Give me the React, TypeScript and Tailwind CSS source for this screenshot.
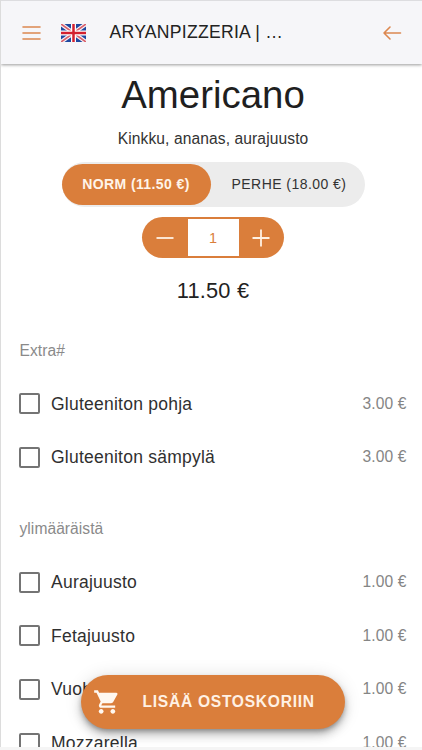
type Extra = { name: string; price: string }

const glutenExtras: Extra[] = [
  { name: 'Gluteeniton pohja', price: '3.00 €' },
  { name: 'Gluteeniton sämpylä', price: '3.00 €' },
]

const toppings: Extra[] = [
  { name: 'Aurajuusto', price: '1.00 €' },
  { name: 'Fetajuusto', price: '1.00 €' },
  { name: 'Vuohenjuusto', price: '1.00 €' },
  { name: 'Mozzarella', price: '1.00 €' },
]

const Flag = () => (
  <svg width="25" height="18" viewBox="0 0 50 36" className="shrink-0">
    <rect width="50" height="36" fill="#1f48a0" />
    <path d="M0 0L50 36M50 0L0 36" stroke="#f7f3f6" strokeWidth="8" />
    <path d="M0 0L50 36M50 0L0 36" stroke="#d9606c" strokeWidth="3.5" />
    <path d="M25 0V36M0 18H50" stroke="#fff" strokeWidth="10" />
    <path d="M25 0V36M0 18H50" stroke="#d3202f" strokeWidth="5" />
  </svg>
)

const Header = () => (
  <header className="relative z-10 flex h-16 shrink-0 items-center bg-[#f6f6f9] border-t border-[#dddde0] pl-[20px] pr-[20.5px] shadow-[0_1px_3px_rgba(0,0,0,0.4)]">
    <svg width="20" height="16" viewBox="0 0 20 16" stroke="#dc8850" strokeWidth="1.6" strokeLinecap="round">
      <path d="M2 2H19M2 8H19M2 14H19" />
    </svg>
    <div className="ml-5 flex">
      <Flag />
    </div>
    <h1 className="ml-[23.5px] flex-1 whitespace-nowrap text-[17.6px] tracking-[0.26px] text-[#222]">ARYANPIZZERIA | …</h1>
    <svg width="20" height="16" viewBox="0 0 20 16" fill="none" stroke="#dc8850" strokeWidth="1.6" strokeLinecap="round" strokeLinejoin="round">
      <path d="M8 2L2 8L8 14M2 8H18.5" />
    </svg>
  </header>
)

const ExtraRow = ({ name, price }: Extra) => (
  <li className="flex h-[53.7px] items-center">
    <span className="h-[21px] w-[21px] shrink-0 rounded-[2px] border-2 border-[#747474]" />
    <span className="ml-[11px] flex-1 text-[17.5px] tracking-[0.24px] text-[#303030]">{name}</span>
    <span className="pb-px text-[15.6px] tracking-[0.1px] text-[#858585]">{price}</span>
  </li>
)

const ExtraGroup = ({ title, items }: { title: string; items: Extra[] }) => (
  <section className="pl-[18px] pr-[15.5px]">
    <h3 className="flex h-[53px] items-center pl-[0.5px] text-[15.6px] tracking-[0.05px] text-[#8a8a8a]">{title}</h3>
    <ul>
      {items.map((item) => (
        <ExtraRow key={item.name} {...item} />
      ))}
    </ul>
  </section>
)

const App = () => {
  return (
    <div className="relative h-[750px] w-[422px] bg-[#f5f5f5] font-['Liberation_Sans',Arial,sans-serif]">
      <div className="flex h-[747px] flex-col overflow-hidden border-l border-[#dcdcdc] bg-white">
        <Header />

        <main className="flex flex-col">
          <div className="flex flex-col items-center pl-[3px]">
            <h2 className="mt-[7px] h-[49px] text-[38.4px] leading-[48px] text-[#1f1f1f]">Americano</h2>
            <p className="mt-[9px] h-5 text-[15.6px] leading-5 tracking-[0.1px] text-[#333]">Kinkku, ananas, aurajuusto</p>

            <div className="mt-[13px] flex h-[45px] w-[303px] items-center rounded-full bg-[#ececec]">
              <button className="h-[41px] w-[149px] rounded-full bg-[#da7e3b] text-[14px] font-bold tracking-[0.4px] text-[#fff4e9]">
                NORM (11.50 €)
              </button>
              <button className="flex-1 pl-[3px] text-[14px] tracking-[0.45px] text-[#333]">PERHE (18.00 €)</button>
            </div>

            <div className="mt-[10px] flex h-[41px] w-[142px] items-center rounded-full bg-[#da7e3b]">
              <button className="flex flex-1 justify-center">
                <svg width="20" height="20" viewBox="0 0 20 20" stroke="#fff1e4" strokeWidth="1.8">
                  <path d="M1.5 10H18.5" />
                </svg>
              </button>
              <span className="flex h-[37px] w-[51px] items-center justify-center bg-white pt-[2px] text-[14.5px] text-[#da7e3b]">1</span>
              <button className="flex flex-1 justify-center">
                <svg width="20" height="20" viewBox="0 0 20 20" stroke="#fff1e4" strokeWidth="1.8">
                  <path d="M1.5 10H18.5M10 1.5V18.5" />
                </svg>
              </button>
            </div>

            <p className="mt-[19px] h-7 text-[21.8px] leading-7 tracking-[0.2px] text-[#222]">11.50 €</p>
          </div>

          <div className="mt-[19px] flex flex-col gap-[18px]">
            <ExtraGroup title="Extra#" items={glutenExtras} />
            <ExtraGroup title="ylimääräistä" items={toppings} />
          </div>
        </main>
      </div>

      {/* floating add-to-cart button */}
      <button className="absolute left-[81px] top-[675px] z-20 flex h-[54px] w-[264px] items-center rounded-full bg-[#da7e3b] pl-3 text-[15.6px] font-bold tracking-[0.72px] text-[#fff1e4] shadow-[0_3px_5px_-1px_rgba(0,0,0,0.3),0_6px_10px_rgba(0,0,0,0.2),0_1px_18px_rgba(0,0,0,0.12)]">
        <svg width="28" height="28" viewBox="0 0 24 24" fill="#fff8f0">
          <path d="M7 18c-1.1 0-1.99.9-1.99 2S5.9 22 7 22s2-.9 2-2-.9-2-2-2z" />
          <path d="M17 18c-1.1 0-1.99.9-1.99 2s.89 2 1.99 2 2-.9 2-2-.9-2-2-2z" />
          <path d="M1 2v2h2l3.6 7.59-1.35 2.45C4.52 15.37 5.48 17 7 17h12v-2H7.42c-.14 0-.25-.11-.25-.25l.03-.12L8.1 13h7.45c.75 0 1.41-.41 1.75-1.03l3.58-6.49C21.25 4.82 20.77 4 20.01 4H5.21l-.94-2H1z" />
        </svg>
        <span className="ml-[21.5px] whitespace-nowrap">LISÄÄ OSTOSKORIIN</span>
      </button>
    </div>
  )
}

export default App
